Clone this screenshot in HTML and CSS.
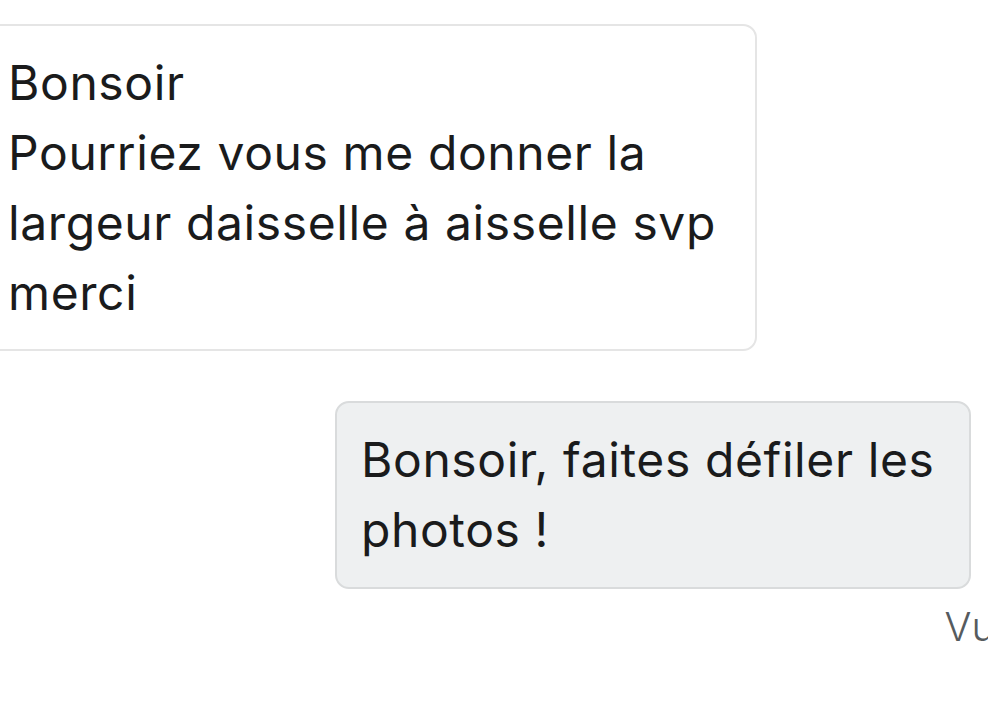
FILE: index.html
```html
<!DOCTYPE html>
<html lang="fr">
<head>
<meta charset="utf-8">
<title>Conversation</title>
<link rel="stylesheet" href="styles.css">
</head>
<body>
<main class="thread">
  <div class="msg msg-in">
    <p class="bubble bubble-in">Bonsoir<br>Pourriez vous me donner la largeur daisselle à aisselle svp<br>merci</p>
  </div>
  <div class="msg msg-out">
    <p class="bubble bubble-out">Bonsoir, faites défiler les photos !</p>
  </div>
  <div class="status">Vu</div>
</main>
</body>
</html>
```
FILE: styles.css
```css
html, body {
  margin: 0;
  padding: 0;
  background: #ffffff;
}

body {
  width: 988px;
  height: 703px;
  overflow: hidden;
  font-family: "Inter", "Noto Sans", sans-serif;
  color: #1a1b1c;
}

.thread {
  display: flex;
  flex-direction: column;
  width: 1013px;
  margin-left: -18px;
  padding-top: 24px;
}

.msg {
  display: flex;
}

.msg-in {
  justify-content: flex-start;
}

.msg-out {
  justify-content: flex-end;
  margin-top: 50px;
  padding-right: 24px;
}

.bubble {
  margin: 0;
  padding: 22px 24px 21px;
  font-size: 48px;
  line-height: 70px;
  letter-spacing: 0.6px;
  border-radius: 14px;
  box-sizing: border-box;
}

.bubble-in {
  width: 775px;
  background: #ffffff;
  border: 2px solid #e5e5e5;
}

.bubble-out {
  width: 636px;
  background: #eef0f1;
  border: 2px solid #d9dbdc;
  padding-bottom: 22px;
}

.status {
  align-self: flex-end;
  margin-top: 14px;
  font-size: 40px;
  line-height: 48px;
  font-weight: 300;
  color: #565b5e;
}
```
